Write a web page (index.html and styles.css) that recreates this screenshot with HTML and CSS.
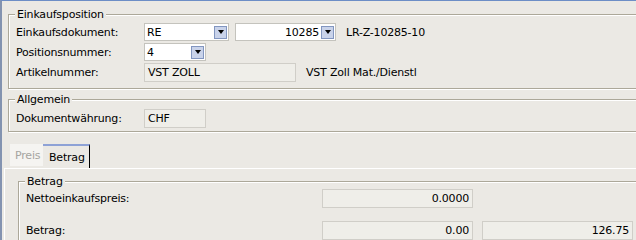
FILE: index.html
```html
<!DOCTYPE html>
<html lang="de">
<head>
  <meta charset="UTF-8">
  <title>Einkaufsposition</title>
  <link rel="stylesheet" href="styles.css">
</head>
<body>
  <div class="window">

    <div class="group">
      <div class="group-title">Einkaufsposition</div>
      <div class="rows">
        <div class="row">
          <span class="label">Einkaufsdokument:</span>
          <div class="combo combo-doc"><span class="value">RE</span><span class="drop"></span></div>
          <div class="combo combo-nr"><span class="value right">10285</span><span class="drop"></span></div>
          <span class="info info-doc">LR-Z-10285-10</span>
        </div>
        <div class="row">
          <span class="label">Positionsnummer:</span>
          <div class="combo combo-pos"><span class="value">4</span><span class="drop"></span></div>
        </div>
        <div class="row row-tall">
          <span class="label">Artikelnummer:</span>
          <div class="field field-art">VST ZOLL</div>
          <span class="info">VST Zoll Mat./Dienstl</span>
        </div>
      </div>
    </div>

    <div class="group group-gap">
      <div class="group-title">Allgemein</div>
      <div class="rows rows-single">
        <div class="row row-tall">
          <span class="label">Dokumentwährung:</span>
          <div class="field field-cur">CHF</div>
        </div>
      </div>
    </div>

    <div class="tabs">
      <div class="tab">Preis</div>
      <div class="tab active">Betrag</div>
    </div>

    <div class="panel">
      <div class="group group-inner">
        <div class="group-title">Betrag</div>
        <div class="rows rows-amount">
          <div class="row row-tall">
            <span class="label label-wide">Nettoeinkaufspreis:</span>
            <div class="field field-num">0.0000</div>
          </div>
          <div class="row row-tall">
            <span class="label label-wide">Betrag:</span>
            <div class="field field-num">0.00</div>
            <div class="field field-num">126.75</div>
          </div>
        </div>
      </div>
    </div>

  </div>
</body>
</html>
```

FILE: styles.css
```css
body {
  margin: 0;
  background: #ebe9e4;
  font-family: "DejaVu Sans", sans-serif;
  font-size: 11px;
  letter-spacing: -0.2px;
  color: #000;
  overflow: hidden;
}

.window {
  height: 240px;
  box-sizing: border-box;
  border-top: 1px solid #6d8ec6;
  border-left: 2px solid #8393b0;
  overflow: hidden;
}

/* Rahmen im Stil einer Windows-Groupbox */
.group {
  margin: 13px -20px 0 6px;
  padding: 0 0 6px 7px;
  border: 1px solid #aca899;
  box-shadow: inset 1px 1px 0 #fff, 1px 1px 0 #fff;
}

.group-gap {
  margin-top: 10px;
  padding-bottom: 3px;
}

.group-title {
  width: fit-content;
  margin: -7px 0 0 -1px;
  padding: 0 2px;
  line-height: 13px;
  background: #ebe9e4;
}

.rows {
  display: flex;
  flex-direction: column;
  gap: 2px;
  margin-top: 2px;
}

.rows-single {
  margin-top: 3px;
}

.row {
  display: flex;
  align-items: center;
  height: 18px;
}

.row-tall {
  height: 19px;
}

.label {
  flex: none;
  width: 128px;
}

.label-wide {
  width: 296px;
}

.combo {
  display: flex;
  align-items: center;
  height: 18px;
  box-sizing: border-box;
  padding-left: 2px;
  border: 1px solid #c4c3bd;
  background: #fff;
}

.combo .value {
  flex: 1;
}

.combo .right {
  text-align: right;
  padding-right: 2px;
}

.combo-doc { width: 85px; }
.combo-nr { width: 101px; margin-left: 6px; }
.combo-pos { width: 62px; }

.drop {
  display: flex;
  align-items: center;
  justify-content: center;
  width: 13px;
  height: 13px;
  box-sizing: border-box;
  margin-right: 1px;
  border: 1px solid #8296c0;
  background: #c9d3ea;
}

.drop::after {
  content: "";
  border-left: 3px solid transparent;
  border-right: 3px solid transparent;
  border-top: 4px solid #000;
}

.info {
  margin-left: 10px;
}

.field {
  display: flex;
  align-items: center;
  height: 19px;
  box-sizing: border-box;
  padding: 0 3px;
  border: 1px solid #d0cec8;
  background: #efeee9;
}

.field-art { width: 152px; }
.field-cur { width: 62px; }

.field-num {
  width: 151px;
  justify-content: flex-end;
}

.field-num + .field-num {
  margin-left: 9px;
}

.tabs {
  display: flex;
  align-items: flex-start;
  height: 24px;
  margin: 12px 0 0 8px;
}

.tab {
  display: flex;
  align-items: center;
  height: 22px;
  box-sizing: border-box;
  width: 33px;
  padding-left: 5px;
  background: #f5f4f1;
  color: #a5a4a0;
}

.tab.active {
  width: 47px;
  height: 24px;
  padding-left: 6px;
  border-top: 2px solid #8ea2d6;
  border-right: 1px solid #000;
  background: #ebe9e4;
  color: #000;
}

.panel {
  margin-left: 2px;
  border-top: 1px solid #fff;
  border-left: 1px solid #fff;
  height: 100px;
}

.group-inner {
  margin: 12px -20px 0 13px;
  height: 100px;
}

.rows-amount {
  gap: 13px;
  margin-top: 1px;
}
```
